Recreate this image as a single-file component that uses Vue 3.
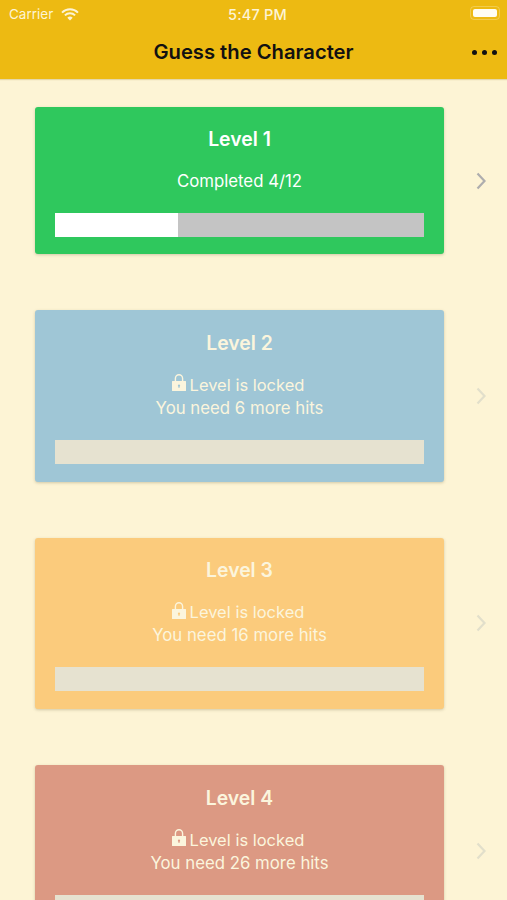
<script setup>
const levels = [
  { id: 1, color: 'green', locked: false, progress: 4 / 12, text: 'Completed 4/12' },
  { id: 2, color: 'blue', locked: true, progress: 0, text: 'You need 6 more hits' },
  { id: 3, color: 'orange', locked: true, progress: 0, text: 'You need 16 more hits' },
  { id: 4, color: 'red', locked: true, progress: 0, text: 'You need 26 more hits' },
]
</script>

<template>
  <div class="screen">
    <header class="top">
      <div class="status-bar">
        <div class="carrier">
          <span>Carrier</span>
          <svg class="wifi" viewBox="0 0 18 13" width="18" height="13">
            <path d="M1 4.6a11.4 11.4 0 0 1 16 0" />
            <path d="M3.9 7.4a7.3 7.3 0 0 1 10.2 0" />
            <path class="wifi-dot" d="M9 12.6 6.3 9.8a3.9 3.9 0 0 1 5.4 0z" />
          </svg>
        </div>
        <span class="time">5:47 PM</span>
        <div class="battery"><div class="battery-fill"></div></div>
      </div>
      <div class="nav-bar">
        <h1>Guess the Character</h1>
        <div class="dots"><i></i><i></i><i></i></div>
      </div>
    </header>

    <main class="list">
      <div v-for="level in levels" :key="level.id" class="row">
        <div class="card" :class="[level.color, { locked: level.locked }]">
          <h2>Level {{ level.id }}</h2>
          <div class="info">
            <p v-if="level.locked" class="lock-line">
              <svg class="lock" viewBox="0 0 14 17" width="14" height="17">
                <path class="shackle" d="M3.4 8V4.4a3.6 3.6 0 0 1 7.2 0V8" />
                <path class="lock-body" fill-rule="evenodd" d="M.5 7h13a.5.5 0 0 1 .5.5v9a.5.5 0 0 1-.5.5H.5a.5.5 0 0 1-.5-.5v-9A.5.5 0 0 1 .5 7zM7 10.6a1.1 1.1 0 0 0-.5 2.1v1.3h1v-1.3A1.1 1.1 0 0 0 7 10.6z" />
              </svg>
              <span>Level is locked</span>
            </p>
            <p>{{ level.text }}</p>
          </div>
          <div class="bar">
            <div class="bar-fill" :style="{ width: level.progress * 100 + '%' }"></div>
          </div>
        </div>
        <svg class="chevron" viewBox="0 0 12 20" width="12" height="20">
          <path d="M2.5 2.5 9.5 10l-7 7.5" />
        </svg>
      </div>
    </main>
  </div>
</template>

<style>
html,
body {
  margin: 0;
  height: 100%;
  overflow: hidden;
  background: #fdf4d5;
}
</style>

<style scoped>
.screen {
  width: 507px;
  height: 900px;
  overflow: hidden;
  background: #fdf4d5;
  font-family: Inter, "Liberation Sans", sans-serif;
}

.top {
  height: 79px;
  background: #edba12;
  box-shadow: 0 1px 1px rgba(160, 130, 40, 0.25);
}

.status-bar {
  height: 28px;
  padding: 0 7px 0 9px;
  display: grid;
  grid-template-columns: 1fr auto 1fr;
  align-items: center;
  color: #fdf4d5;
  font-size: 13.5px;
}

.carrier {
  display: flex;
  align-items: center;
  gap: 8px;
}

.wifi path {
  fill: none;
  stroke: #fdf4d5;
  stroke-width: 2;
}

.wifi .wifi-dot {
  fill: #fdf4d5;
  stroke: none;
}

.time {
  margin-left: 6px;
  font-weight: 500;
  font-size: 14.5px;
  letter-spacing: 0.2px;
}

.battery {
  justify-self: end;
  width: 30px;
  height: 14px;
  margin-top: -2px;
  padding: 2px;
  box-sizing: border-box;
  border: 1px solid rgba(253, 244, 213, 0.3);
  border-radius: 4px;
}

.battery-fill {
  height: 100%;
  background: #fffdf2;
  border-radius: 2px;
}

.nav-bar {
  height: 51px;
  position: relative;
  display: flex;
  align-items: center;
  justify-content: center;
}

h1 {
  margin: 0 0 4px;
  font-size: 20.2px;
  font-weight: 600;
  color: #111;
}

.dots {
  position: absolute;
  right: 10px;
  top: 22px;
  display: flex;
  gap: 5px;
}

.dots i {
  width: 5px;
  height: 5px;
  border-radius: 50%;
  background: #111;
}

.list {
  padding: 28px 0 0 35px;
  display: flex;
  flex-direction: column;
  gap: 56px;
}

.row {
  display: flex;
  align-items: center;
  gap: 31px;
  flex-shrink: 0;
}

.card {
  width: 409px;
  box-sizing: border-box;
  padding: 21px 20px 17px;
  border-radius: 3px;
  box-shadow: 0 1px 3px rgba(110, 100, 60, 0.3);
  color: #fff;
  text-align: center;
}

.card.locked {
  padding-top: 21.5px;
  padding-bottom: 18px;
  color: #fbf5dd;
}

.green { background: #2fc85d; }
.blue { background: #9fc6d6; }
.orange { background: #fbcb7c; }
.red { background: #dc9983; }

h2 {
  margin: 0;
  font-size: 19.4px;
  line-height: 22px;
  font-weight: 600;
}

.info {
  margin: 20px 0;
  font-size: 16.8px;
  line-height: 23px;
}

.info p {
  margin: 0;
}

.lock-line {
  display: flex;
  justify-content: center;
  align-items: center;
  gap: 4px;
  font-size: 16.5px;
}

.lock {
  margin: -5px 0 0 -3px;
}

.shackle {
  fill: none;
  stroke: #fbf5dd;
  stroke-width: 1.4;
}

.lock-body {
  fill: #fbf5dd;
}

.bar {
  height: 24px;
  background: #c4c4c4;
}

.locked .bar {
  background: #e6e2d0;
}

.bar-fill {
  height: 100%;
  background: #fff;
}

.chevron {
  flex-shrink: 0;
}

.chevron path {
  fill: none;
  stroke: #aeadae;
  stroke-width: 2.2;
}

.locked + .chevron path {
  stroke: #e2dfcb;
}
</style>
